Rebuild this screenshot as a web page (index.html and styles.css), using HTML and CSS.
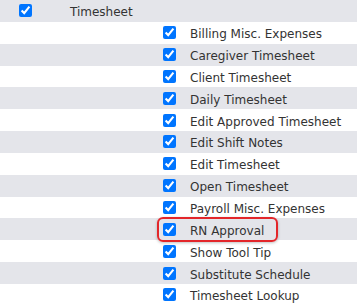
FILE: index.html
```html
<html>
  <head>
    <link rel="stylesheet" href="styles.css">
  </head>
  <body>
    <div class="list">
      <div class="row head">
        <span class="cell-check"><input type="checkbox" checked></span>
        <span class="label">Timesheet</span>
      </div>
      <div class="row item"><input type="checkbox" checked><span class="label">Billing Misc. Expenses</span></div>
      <div class="row item"><input type="checkbox" checked><span class="label">Caregiver Timesheet</span></div>
      <div class="row item"><input type="checkbox" checked><span class="label">Client Timesheet</span></div>
      <div class="row item"><input type="checkbox" checked><span class="label">Daily Timesheet</span></div>
      <div class="row item"><input type="checkbox" checked><span class="label">Edit Approved Timesheet</span></div>
      <div class="row item"><input type="checkbox" checked><span class="label">Edit Shift Notes</span></div>
      <div class="row item"><input type="checkbox" checked><span class="label">Edit Timesheet</span></div>
      <div class="row item"><input type="checkbox" checked><span class="label">Open Timesheet</span></div>
      <div class="row item"><input type="checkbox" checked><span class="label">Payroll Misc. Expenses</span></div>
      <div class="row item marked"><input type="checkbox" checked><span class="label">RN Approval</span><span class="highlight"></span></div>
      <div class="row item"><input type="checkbox" checked><span class="label">Show Tool Tip</span></div>
      <div class="row item"><input type="checkbox" checked><span class="label">Substitute Schedule</span></div>
      <div class="row item"><input type="checkbox" checked><span class="label">Timesheet Lookup</span></div>
    </div>
  </body>
</html>
```

FILE: styles.css
```css
body{
  margin: 0;
  font-family: "DejaVu Sans", Verdana, sans-serif;
  font-size: 12px;
  color: #333;
  background: #fff;
}
.list{
  width: 357px;
}
.row{
  display: flex;
  align-items: center;
  height: 21.85px;
  background: #fff;
}
.row:nth-child(odd){
  background: #e4e5ea;
}
.row input{
  margin: 0;
  width: 13px;
  height: 13px;
  accent-color: #0075ff;
}
.label{
  padding-top: 3px;
}
.head .cell-check{
  display: flex;
  width: 70px;
  padding-left: 19px;
  box-sizing: border-box;
}
.item{
  padding-left: 163px;
}
.item .label{
  margin-left: 14px;
}
.marked{
  position: relative;
}
.highlight{
  position: absolute;
  left: 157px;
  top: -1px;
  width: 121px;
  height: 25px;
  box-sizing: border-box;
  border: 2px solid #e3262a;
  border-radius: 6px;
  box-shadow: 0 1px 3px rgba(0,0,0,0.25);
}
```
